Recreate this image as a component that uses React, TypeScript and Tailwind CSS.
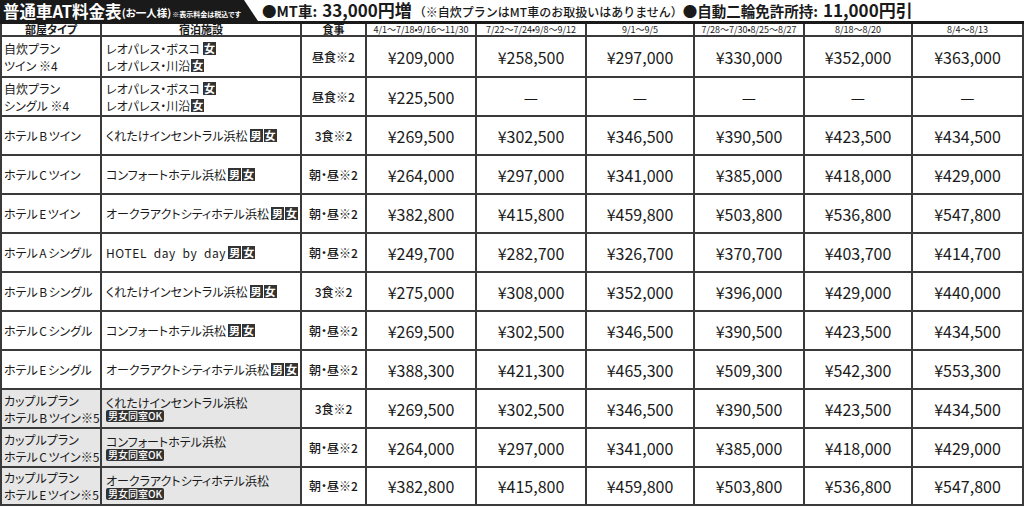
import React from "react";

const COLS = "grid grid-cols-[100px_200px_65px_110px_110px_108px_110px_108px_1fr]";
const LINE = "border-[#3a3a3a]";

const Sq = ({ c }: { c: string }) => (
  <span className="inline-flex items-center justify-center w-[13px] h-[13px] bg-[#333] text-white text-[11px] font-bold leading-none">
    {c}
  </span>
);

const Couple = () => (
  <span className="inline-flex items-center h-[12px] px-[2px] rounded-[2px] bg-[#333] text-white text-[10px] leading-none font-medium">
    男女同室OK
  </span>
);

type Row = {
  type: React.ReactNode;
  hotel: React.ReactNode;
  meal: string;
  prices: string[];
  couple?: boolean;
  h: string;
};

const MF = () => (
  <span className="inline-flex gap-[1px] ml-[2px]">
    <Sq c="男" />
    <Sq c="女" />
  </span>
);

const hotelLine = (name: string) => (
  <div className="flex items-center">
    <span>{name}</span>
    <MF />
  </div>
);

const leo = (
  <div className="flex flex-col leading-[17px]">
    <div className="flex items-center">
      <span>レオパレス・ボスコ</span>
      <span className="ml-[3px] inline-flex"><Sq c="女" /></span>
    </div>
    <div className="flex items-center">
      <span>レオパレス・川沿</span>
      <span className="ml-[1px] inline-flex"><Sq c="女" /></span>
    </div>
  </div>
);

const coupleHotel = (name: string) => (
  <div className="flex flex-col leading-[15px]">
    <span>{name}</span>
    <div className="flex"><Couple /></div>
  </div>
);

const two = (a: React.ReactNode, b: React.ReactNode) => (
  <div className="flex flex-col leading-[17px]">
    <span>{a}</span>
    <span>{b}</span>
  </div>
);

const hotelType = (letter: string, kind: string, suffix = "") => (
  <span className="inline-flex items-baseline">
    ホテル<span className="mx-[1.5px]">{letter}</span>{kind}{suffix}
  </span>
);

const D = "—";

const rows: Row[] = [
  { h: "h-[41px]", type: two("自炊プラン", "ツイン ※4"), hotel: leo, meal: "昼食※2", prices: ["¥209,000", "¥258,500", "¥297,000", "¥330,000", "¥352,000", "¥363,000"] },
  { h: "h-[39px]", type: two("自炊プラン", "シングル ※4"), hotel: leo, meal: "昼食※2", prices: ["¥225,500", D, D, D, D, D] },
  { h: "h-[39px]", type: hotelType("B", "ツイン"), hotel: hotelLine("くれたけインセントラル浜松"), meal: "3食※2", prices: ["¥269,500", "¥302,500", "¥346,500", "¥390,500", "¥423,500", "¥434,500"] },
  { h: "h-[39px]", type: hotelType("C", "ツイン"), hotel: hotelLine("コンフォートホテル浜松"), meal: "朝・昼※2", prices: ["¥264,000", "¥297,000", "¥341,000", "¥385,000", "¥418,000", "¥429,000"] },
  { h: "h-[39px]", type: hotelType("E", "ツイン"), hotel: hotelLine("オークラアクトシティホテル浜松"), meal: "朝・昼※2", prices: ["¥382,800", "¥415,800", "¥459,800", "¥503,800", "¥536,800", "¥547,800"] },
  { h: "h-[39px]", type: hotelType("A", "シングル"), hotel: (
    <div className="flex items-center">
      <span className="tracking-[0.6px]">HOTEL&nbsp;&nbsp;day&nbsp;&nbsp;by&nbsp;&nbsp;day</span>
      <MF />
    </div>
  ), meal: "朝・昼※2", prices: ["¥249,700", "¥282,700", "¥326,700", "¥370,700", "¥403,700", "¥414,700"] },
  { h: "h-[39px]", type: hotelType("B", "シングル"), hotel: hotelLine("くれたけインセントラル浜松"), meal: "3食※2", prices: ["¥275,000", "¥308,000", "¥352,000", "¥396,000", "¥429,000", "¥440,000"] },
  { h: "h-[39px]", type: hotelType("C", "シングル"), hotel: hotelLine("コンフォートホテル浜松"), meal: "朝・昼※2", prices: ["¥269,500", "¥302,500", "¥346,500", "¥390,500", "¥423,500", "¥434,500"] },
  { h: "h-[39px]", type: hotelType("E", "シングル"), hotel: hotelLine("オークラアクトシティホテル浜松"), meal: "朝・昼※2", prices: ["¥388,300", "¥421,300", "¥465,300", "¥509,300", "¥542,300", "¥553,300"] },
  { h: "h-[39px]", couple: true, type: two("カップルプラン", hotelType("B", "ツイン", "※5")), hotel: coupleHotel("くれたけインセントラル浜松"), meal: "3食※2", prices: ["¥269,500", "¥302,500", "¥346,500", "¥390,500", "¥423,500", "¥434,500"] },
  { h: "h-[39px]", couple: true, type: two("カップルプラン", hotelType("C", "ツイン", "※5")), hotel: coupleHotel("コンフォートホテル浜松"), meal: "朝・昼※2", prices: ["¥264,000", "¥297,000", "¥341,000", "¥385,000", "¥418,000", "¥429,000"] },
  { h: "h-[38px]", couple: true, type: two("カップルプラン", hotelType("E", "ツイン", "※5")), hotel: coupleHotel("オークラアクトシティホテル浜松"), meal: "朝・昼※2", prices: ["¥382,800", "¥415,800", "¥459,800", "¥503,800", "¥536,800", "¥547,800"] },
];

const dates = [
  "4/1〜7/18•9/16〜11/30",
  "7/22〜7/24•9/8〜9/12",
  "9/1〜9/5",
  "7/28〜7/30•8/25〜8/27",
  "8/18〜8/20",
  "8/4〜8/13",
];

export default function App() {
  return (
    <div className="w-[1024px] h-[508px] bg-white overflow-hidden text-[#1a1a1a] [font-feature-settings:'palt'] font-['Noto_Sans_CJK_JP','Noto_Sans_CJK_SC',sans-serif]">
      {/* Title bar */}
      <div className="flex h-[21px] items-stretch">
        <div className="w-[258px] bg-[#1a1a1a] text-white flex items-end pl-[3px] pb-[1px] [clip-path:polygon(0_0,244px_0,258px_100%,0_100%)]">
          <span className="text-[16.5px] font-bold leading-[18px] [font-feature-settings:normal]">普通車AT料金表</span>
          <span className="text-[10.5px] font-bold leading-[14px]">(お一人様)</span>
          <span className="text-[7px] font-bold leading-[11px] ml-[1px]">※表示料金は税込です</span>
        </div>
        <div className="flex items-end pb-[1px] ml-[4px] whitespace-nowrap">
          <span className="text-[14.5px] font-bold leading-[18px]">●MT車:</span>
          <span className="text-[17px] font-bold leading-[20px] ml-[5px]">33,000円増</span>
          <span className="text-[12px] font-medium leading-[16px] ml-[2px] [font-feature-settings:normal]">（※自炊プランはMT車のお取扱いはありません）</span>
          <span className="text-[14.5px] font-bold leading-[18px] ml-0 [font-feature-settings:normal]">●自動二輪免許所持:</span>
          <span className="text-[17px] font-bold leading-[20px] ml-[5px]">11,000円引</span>
        </div>
      </div>
      <div className="h-[3px] bg-[#1a1a1a]" />

      {/* Table */}
      <div className={`border-l-2 border-r-2 ${LINE}`}>
        <div className={`${COLS} h-[13px] border-b-2 ${LINE}`}>
          <div className={`border-r-2 ${LINE} flex items-center justify-center text-[11px] font-bold leading-none`}>部屋タイプ</div>
          <div className={`border-r-2 ${LINE} flex items-center justify-center text-[11px] font-bold leading-none`}>宿泊施設</div>
          <div className={`border-r-2 ${LINE} flex items-center justify-center text-[11px] font-bold leading-none`}>食事</div>
          {dates.map((d, i) => (
            <div
              key={i}
              className={`${i < 5 ? `border-r-2 ${LINE}` : ""} flex items-center justify-center text-[9px] leading-none whitespace-nowrap`}
            >
              {d}
            </div>
          ))}
        </div>
        {rows.map((r, ri) => (
          <div key={ri} className={`${COLS} ${r.h} border-b-2 ${LINE}`}>
            <div className={`border-r-2 ${LINE} flex items-center pl-[2px] text-[12px] leading-[17px] whitespace-nowrap overflow-hidden ${r.couple ? "bg-[#e6e6e6]" : ""}`}>
              {r.type}
            </div>
            <div className={`border-r-2 ${LINE} flex items-center pl-[4px] text-[12px] leading-[17px] whitespace-nowrap ${r.couple ? "bg-[#e6e6e6]" : ""}`}>
              {r.hotel}
            </div>
            <div className={`border-r-2 ${LINE} flex items-center justify-center text-[12px] font-medium whitespace-nowrap`}>
              {r.meal}
            </div>
            {r.prices.map((p, i) => (
              <div
                key={i}
                className={`${i < 5 ? `border-r-2 ${LINE}` : ""} flex items-center justify-center text-[16px] whitespace-nowrap`}
              >
                {p}
              </div>
            ))}
          </div>
        ))}
      </div>
    </div>
  );
}
